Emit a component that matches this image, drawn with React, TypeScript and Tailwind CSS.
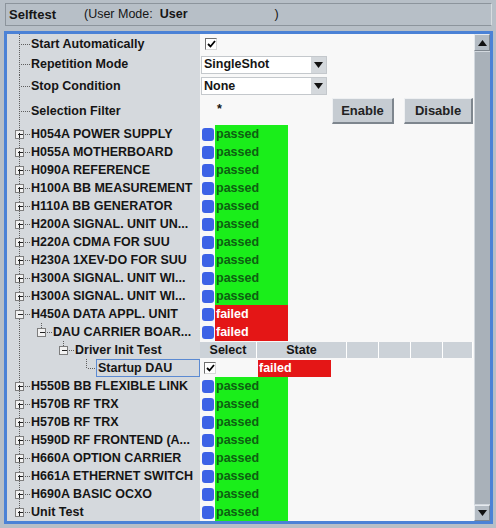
import React from 'react';

type Status = 'passed' | 'failed';

const units: { label: string; status: Status }[] = [
  { label: 'H054A POWER SUPPLY', status: 'passed' },
  { label: 'H055A MOTHERBOARD', status: 'passed' },
  { label: 'H090A REFERENCE', status: 'passed' },
  { label: 'H100A BB MEASUREMENT', status: 'passed' },
  { label: 'H110A BB GENERATOR', status: 'passed' },
  { label: 'H200A SIGNAL. UNIT UN...', status: 'passed' },
  { label: 'H220A CDMA FOR SUU', status: 'passed' },
  { label: 'H230A 1XEV-DO FOR SUU', status: 'passed' },
  { label: 'H300A SIGNAL. UNIT WI...', status: 'passed' },
  { label: 'H300A SIGNAL. UNIT WI...', status: 'passed' },
];

const lower: { label: string; status: Status }[] = [
  { label: 'H550B BB FLEXIBLE LINK', status: 'passed' },
  { label: 'H570B RF TRX', status: 'passed' },
  { label: 'H570B RF TRX', status: 'passed' },
  { label: 'H590D RF FRONTEND (A...', status: 'passed' },
  { label: 'H660A OPTION CARRIER', status: 'passed' },
  { label: 'H661A ETHERNET SWITCH', status: 'passed' },
  { label: 'H690A BASIC OCXO', status: 'passed' },
];

const dot = { stroke: '#5e5e5e', strokeWidth: 1, strokeDasharray: '1 1' };

// tree connector drawing for one row
function Lines({ h, level, box, open, last }: { h: number; level: 0 | 1 | 2 | 3; box?: boolean; open?: boolean; last?: boolean }) {
  const cy = Math.floor(h / 2) + 0.5;
  const w = [24, 46, 68, 89][level];
  const bx = [12.5, 34.5, 56.5, 79.5][level];
  return (
    <svg width={w} height={h} className="shrink-0" shapeRendering="crispEdges">
      <line x1={12.5} y1={0} x2={12.5} y2={last ? cy : h} {...dot} />
      {level > 0 && <line x1={bx} y1={0} x2={bx} y2={level === 3 ? cy : cy - 4} {...dot} />}
      <line x1={box ? bx + 5 : bx + 1} y1={cy} x2={w} y2={cy} {...dot} />
      {box && (
        <g>
          <rect x={bx - 4} y={cy - 4} width={8} height={8} fill="#f2f2f2" stroke="#7d7d7d" />
          <line x1={bx - 2} y1={cy} x2={bx + 3} y2={cy} stroke="#222" />
          {!open && <line x1={bx} y1={cy - 2} x2={bx} y2={cy + 3} stroke="#222" />}
        </g>
      )}
    </svg>
  );
}

function Check() {
  return (
    <div className="w-[12px] h-[12px] bg-white border-t border-l border-[#6f6f6f] border-b border-r border-b-[#d8d8d8] border-r-[#d8d8d8] flex items-center justify-center">
      <svg width="9" height="8" viewBox="0 0 9 8">
        <path d="M1 4 L3.5 6.5 L8 1" fill="none" stroke="#000" strokeWidth="1.8" />
      </svg>
    </div>
  );
}

function Select({ value }: { value: string }) {
  return (
    <div className="ml-[1px] w-[126px] h-[18px] bg-white border border-[#c4c8cc] flex items-center">
      <span className="flex-1 pl-[2px] font-bold">{value}</span>
      <div className="w-[15px] h-full bg-[#d4d8dc] flex items-center justify-center">
        <svg width="9" height="6" viewBox="0 0 9 6"><path d="M0 0 H9 L4.5 6 Z" fill="#111" /></svg>
      </div>
    </div>
  );
}

function Btn({ label, w }: { label: string; w: string }) {
  return (
    <div className={`${w} h-[26px] bg-[#c6ccd2] border-t border-l border-[#eef0f2] border-b-2 border-r-2 border-b-[#7e868e] border-r-[#7e868e] flex items-center justify-center font-bold text-[13px] text-[#222]`}>
      {label}
    </div>
  );
}

function StatusCell({ status }: { status: Status }) {
  return (
    <div className="flex items-center h-full">
      <div className="ml-[2px] w-[12px] h-[13px] rounded-[3px] bg-[#3d62e6]" />
      <div
        className={`ml-[1px] w-[73px] h-full flex items-center pl-[1px] font-bold ${
          status === 'passed' ? 'bg-[#1aee1a] text-[#0e5f12]' : 'bg-[#e41616] text-white'
        }`}
      >
        {status}
      </div>
    </div>
  );
}

function Row({ h, tree, children }: { h: string; tree: React.ReactNode; children?: React.ReactNode }) {
  return (
    <div className={`flex ${h}`}>
      <div className="w-[193px] bg-[#d5d9dd] flex items-center whitespace-nowrap overflow-hidden">{tree}</div>
      <div className="flex-1 bg-[#f8f8f8] flex items-center">{children}</div>
    </div>
  );
}

export default function App() {
  return (
    <div className="w-[496px] h-[528px] bg-[#b7bfc7] font-['Liberation_Sans',Arial,sans-serif] text-[12.5px] text-[#151515] pt-[3px] overflow-hidden">
      {/* title bar */}
      <div className="mx-[5px] w-[487px] h-[23px] border-t border-l border-b border-[#8c949c] border-r border-r-[#d7dce0] flex items-center">
        <span className="ml-[3px] font-bold text-[13px]">Selftest</span>
        <span className="ml-[28px]">(User Mode:</span>
        <span className="ml-[7px] font-bold">User</span>
        <span className="ml-[87px]">)</span>
      </div>

      {/* main panel */}
      <div className="mt-[5px] ml-[4px] w-[489px] h-[493px] border-[3px] border-[#4b82d6] flex">
        <div className="flex-1 flex flex-col">
          <Row h="h-[20px]" tree={<><Lines h={20} level={0} /><span className="font-bold">Start Automatically</span></>}>
            <div className="ml-[5px]"><Check /></div>
          </Row>
          <Row h="h-[21px]" tree={<><Lines h={21} level={0} /><span className="font-bold">Repetition Mode</span></>}>
            <Select value="SingleShot" />
          </Row>
          <Row h="h-[22px]" tree={<><Lines h={22} level={0} /><span className="font-bold">Stop Condition</span></>}>
            <Select value="None" />
          </Row>
          <Row h="h-[28px]" tree={<><Lines h={28} level={0} /><span className="font-bold">Selection Filter</span></>}>
            <span className="ml-[17px] -mt-[4px] font-bold">*</span>
            <div className="ml-auto mr-[1px] flex gap-[10px]">
              <Btn label="Enable" w="w-[62px]" />
              <Btn label="Disable" w="w-[69px]" />
            </div>
          </Row>

          {units.map((u, i) => (
            <Row key={i} h="h-[18px]" tree={<><Lines h={18} level={0} box /><span className="font-bold">{u.label}</span></>}>
              <StatusCell status={u.status} />
            </Row>
          ))}

          <Row h="h-[18px]" tree={<><Lines h={18} level={0} box open /><span className="font-bold">H450A DATA APPL. UNIT</span></>}>
            <StatusCell status="failed" />
          </Row>
          <Row h="h-[18px]" tree={<><Lines h={18} level={1} box open /><span className="font-bold">DAU CARRIER BOAR...</span></>}>
            <StatusCell status="failed" />
          </Row>
          <Row h="h-[18px]" tree={<><Lines h={18} level={2} box open /><span className="font-bold">Driver Init Test</span></>}>
            <div className="flex w-full h-[16px] font-bold">
              <div className="w-[57px] bg-[#ccd2d8] border-r border-white flex items-center justify-center">Select</div>
              <div className="w-[90px] bg-[#ccd2d8] border-r border-white flex items-center justify-center">State</div>
              <div className="w-[32px] bg-[#ccd2d8] border-r border-white" />
              <div className="w-[32px] bg-[#ccd2d8] border-r border-white" />
              <div className="w-[32px] bg-[#ccd2d8] border-r border-white" />
              <div className="w-[30px] bg-[#ccd2d8] border-r border-white" />
              <div className="flex-1" />
            </div>
          </Row>
          <Row
            h="h-[18px]"
            tree={
              <>
                <Lines h={18} level={3} />
                <div className="w-[104px] h-[18px] border border-[#5b8ad2] flex items-center pl-[1px] font-bold">Startup DAU</div>
              </>
            }
          >
            <div className="ml-[4px] w-[54px]"><Check /></div>
            <div className="w-[73px] h-[17px] bg-[#e41616] text-white font-bold flex items-center pl-[1px]">failed</div>
          </Row>

          {lower.map((u, i) => (
            <Row key={i} h="h-[18px]" tree={<><Lines h={18} level={0} box /><span className="font-bold">{u.label}</span></>}>
              <StatusCell status={u.status} />
            </Row>
          ))}
          <Row h="h-[18px]" tree={<><Lines h={18} level={0} box last /><span className="font-bold">Unit Test</span></>}>
            <StatusCell status="passed" />
          </Row>
        </div>

        {/* scrollbar */}
        <div className="w-[16px] bg-[#a9b1b9] flex flex-col">
          <div className="h-[17px] bg-[#b4bcc4] border-t border-l border-[#e6eaee] border-b border-r border-b-[#7f878f] border-r-[#7f878f] flex items-center justify-center">
            <svg width="9" height="6" viewBox="0 0 9 6"><path d="M0 6 H9 L4.5 0 Z" fill="#111" /></svg>
          </div>
          <div className="flex-1 border-t border-l border-[#d2d8de] border-b border-b-[#d2d8de]" />
          <div className="h-[16px] bg-[#b4bcc4] border-t border-l border-[#e6eaee] border-b border-r border-b-[#7f878f] border-r-[#7f878f] flex items-center justify-center">
            <svg width="9" height="6" viewBox="0 0 9 6"><path d="M0 0 H9 L4.5 6 Z" fill="#111" /></svg>
          </div>
        </div>
      </div>
    </div>
  );
}
